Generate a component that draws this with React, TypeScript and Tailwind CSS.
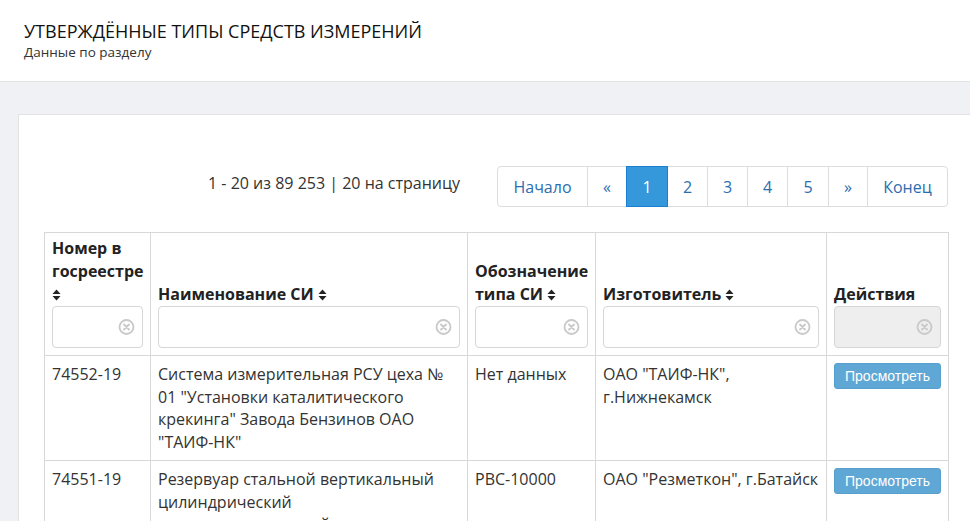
import React from "react";

const SortIcon = () => (
  <svg width="9" height="12" viewBox="0 0 9 12" className="inline-block align-[-1px] ml-[4px]">
    <path d="M4.5 0.5 L8.5 5 L0.5 5 Z" fill="#222" />
    <path d="M4.5 11.5 L8.5 7 L0.5 7 Z" fill="#222" />
  </svg>
);

const ClearIcon = () => (
  <svg width="17" height="17" viewBox="0 0 17 17" className="absolute right-[7px] top-1/2 -translate-y-1/2">
    <circle cx="8.5" cy="8.5" r="7" fill="none" stroke="#c9c9c9" strokeWidth="1.8" />
    <path d="M6 6 L11 11 M11 6 L6 11" stroke="#c9c9c9" strokeWidth="1.8" strokeLinecap="round" />
  </svg>
);

const FilterInput = ({ disabled }: { disabled?: boolean }) => (
  <div
    className={`relative h-[42px] w-full rounded-[4px] border border-[#d6d6d6] ${
      disabled ? "bg-[#eeeeee]" : "bg-white"
    }`}
  >
    <ClearIcon />
  </div>
);

const Btn = () => (
  <button
    className="rounded-[3px] border border-[#57a0cd] bg-[#5fa7d4] px-[10px] py-[2px] text-[14px] leading-[20px] text-white"
    style={{ fontFamily: '"Liberation Sans", Arial, sans-serif' }}
  >
    Просмотреть
  </button>
);

export default function App() {
  const pages: [string, number][] = [
    ["Начало", 91],
    ["«", 40],
    ["1", 42],
    ["2", 41],
    ["3", 41],
    ["4", 41],
    ["5", 42],
    ["»", 40],
    ["Конец", 81],
  ];
  const td = "border border-[#d8d8d8] px-[7px] pt-[7px] pb-[6px]";
  const th = "border border-[#d8d8d8] px-[7px] pb-[7px] pt-[4px]";
  return (
    <div
      className="h-[521px] w-full overflow-hidden bg-[#f0f1f5] text-[#333]"
      style={{ fontFamily: '"Open Sans", "Noto Sans", sans-serif' }}
    >
      <div className="h-[82px] border-b border-[#e4e4e4] bg-white pl-[24px] pt-[20px]">
        <div className="text-[18px] leading-[22px] text-[#111]">УТВЕРЖДЁННЫЕ ТИПЫ СРЕДСТВ ИЗМЕРЕНИЙ</div>
        <div className="mt-[1px] text-[13.5px] leading-[18px] text-[#333]">Данные по разделу</div>
      </div>
      <div className="ml-[18px] mt-[32px] w-[960px] border border-[#e3e3e3] bg-white pl-[25px] pt-[51px]">
        <div className="flex w-[904px] items-start justify-end">
          <div className="mr-[37px] mt-[6px] text-[16px] leading-[22px] text-[#333]">
            1 - 20 из 89 253 | 20 на страницу
          </div>
          <div className="flex">
            {pages.map(([p, w], i) => {
              const active = p === "1";
              return (
                <div
                  key={p}
                  style={{ width: w }}
                  className={`flex h-[41px] items-center justify-center text-[16px] ${i > 0 ? "-ml-px" : ""} ${
                    i === 0 ? "rounded-l-[4px]" : ""
                  } ${i === pages.length - 1 ? "rounded-r-[4px]" : ""} ${
                    active
                      ? "relative z-10 border border-[#1a7fd0] bg-[#3498db] text-white"
                      : "border border-[#dddddd] bg-white text-[#2c6db0]"
                  }`}
                >
                  {p}
                </div>
              );
            })}
          </div>
        </div>
        <table className="mt-[25px] w-[904px] table-fixed border-collapse">
          <colgroup>
            <col className="w-[106px]" />
            <col className="w-[317px]" />
            <col className="w-[128px]" />
            <col className="w-[231px]" />
            <col className="w-[122px]" />
          </colgroup>
          <thead>
            <tr className="text-left align-bottom text-[16px] font-bold leading-[23px] text-[#222]">
              <th className={th}>
                <div className="whitespace-nowrap">Номер в</div>
                <div className="whitespace-nowrap">госреестре</div>
                <div className="-ml-[4px]">
                  <SortIcon />
                </div>
                <FilterInput />
              </th>
              <th className={th}>
                <div>
                  Наименование СИ<SortIcon />
                </div>
                <FilterInput />
              </th>
              <th className={th}>
                <div className="whitespace-nowrap">Обозначение</div>
                <div className="whitespace-nowrap">
                  типа СИ<SortIcon />
                </div>
                <FilterInput />
              </th>
              <th className={th}>
                <div>
                  Изготовитель<SortIcon />
                </div>
                <FilterInput />
              </th>
              <th className={th}>
                <div>Действия</div>
                <FilterInput disabled />
              </th>
            </tr>
          </thead>
          <tbody className="text-[16px] leading-[22.7px] text-[#333]">
            <tr className="align-top">
              <td className={td}>74552-19</td>
              <td className={td}>
                Система измерительная РСУ цеха №<br />
                01 "Установки каталитического
                <br />
                крекинга" Завода Бензинов ОАО
                <br />
                "ТАИФ-НК"
              </td>
              <td className={td}>Нет данных</td>
              <td className={td}>
                ОАО "ТАИФ-НК",
                <br />
                г.Нижнекамск
              </td>
              <td className={td}>
                <Btn />
              </td>
            </tr>
            <tr className="align-top">
              <td className={td}>74551-19</td>
              <td className={td}>
                Резервуар стальной вертикальный
                <br />
                цилиндрический
                <br />
                теплоизолированный
              </td>
              <td className={td}>РВС-10000</td>
              <td className={`${td} whitespace-nowrap`}>ОАО "Резметкон", г.Батайск</td>
              <td className={td}>
                <Btn />
              </td>
            </tr>
          </tbody>
        </table>
      </div>
    </div>
  );
}
